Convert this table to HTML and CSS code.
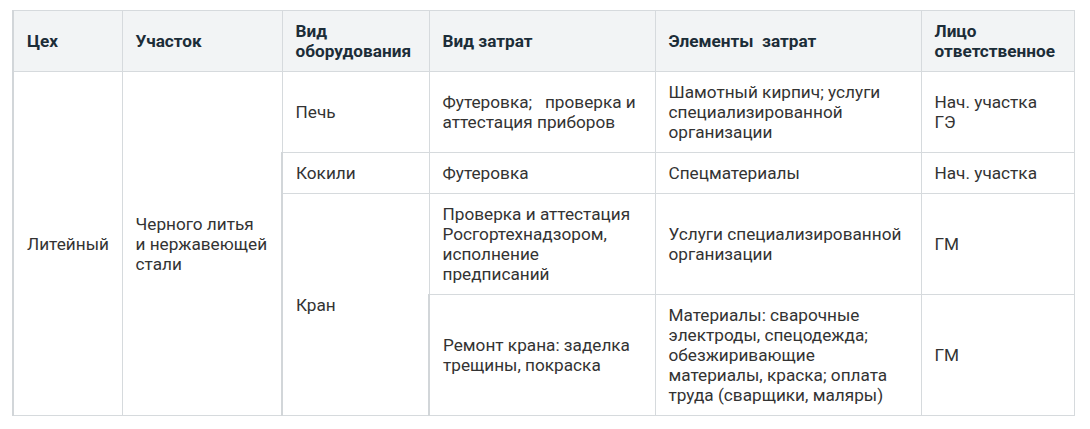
FILE: index.html
```html
<!DOCTYPE html>
<html lang="ru">
<head>
<meta charset="utf-8">
<link rel="stylesheet" href="styles.css">
</head>
<body>
<div class="page">
<table class="costs">
  <colgroup>
    <col class="c1"><col class="c2"><col class="c3"><col class="c4"><col class="c5"><col class="c6">
  </colgroup>
  <thead>
    <tr>
      <th>Цех</th>
      <th>Участок</th>
      <th>Вид оборудования</th>
      <th>Вид затрат</th>
      <th>Элементы&nbsp; затрат</th>
      <th>Лицо ответственное</th>
    </tr>
  </thead>
  <tbody>
    <tr>
      <td rowspan="4">Литейный</td>
      <td rowspan="4">Черного литья <span class="nowrap">и нержавеющей</span> стали</td>
      <td>Печь</td>
      <td>Футеровка;&nbsp;&nbsp; проверка и аттестация приборов</td>
      <td>Шамотный кирпич; услуги специализированной организации</td>
      <td>Нач. участка ГЭ</td>
    </tr>
    <tr>
      <td>Кокили</td>
      <td>Футеровка</td>
      <td>Спецматериалы</td>
      <td>Нач. участка</td>
    </tr>
    <tr>
      <td rowspan="2">Кран</td>
      <td>Проверка и аттестация Росгортехнадзором, исполнение предписаний</td>
      <td>Услуги специализированной организации</td>
      <td>ГМ</td>
    </tr>
    <tr>
      <td>Ремонт крана: заделка трещины, покраска</td>
      <td>Материалы: сварочные электроды, спецодежда; обезжиривающие материалы, краска; оплата труда (сварщики, маляры)</td>
      <td>ГМ</td>
    </tr>
  </tbody>
</table>
</div>
</body>
</html>
```

FILE: styles.css
```css
html, body {
  margin: 0;
  padding: 0;
  background: #ffffff;
}
.page {
  padding: 10px 0 0 12px;
}
.costs {
  border-collapse: collapse;
  table-layout: fixed;
  width: 1061px;
  font-family: Roboto, "Liberation Sans", Arial, sans-serif;
  font-size: 17.2px;
  line-height: 20px;
  color: #333333;
  border-left: 2px solid #d2d6d9;
}
.c1 { width: 109px; }
.c2 { width: 160px; }
.c3 { width: 147px; }
.c4 { width: 226px; }
.c5 { width: 266px; }
.c6 { width: 153px; }
.costs th,
.costs td {
  border: 1px solid #d6dadd;
  padding: 10px 12px 10px 13px;
  vertical-align: middle;
  text-align: left;
}
.costs th {
  background: #f2f4f5;
  font-weight: 700;
  color: #1c2d38;
}
.costs tr > :first-child {
  border-left: 2px solid #d2d6d9;
}
.nowrap {
  white-space: nowrap;
}
```
